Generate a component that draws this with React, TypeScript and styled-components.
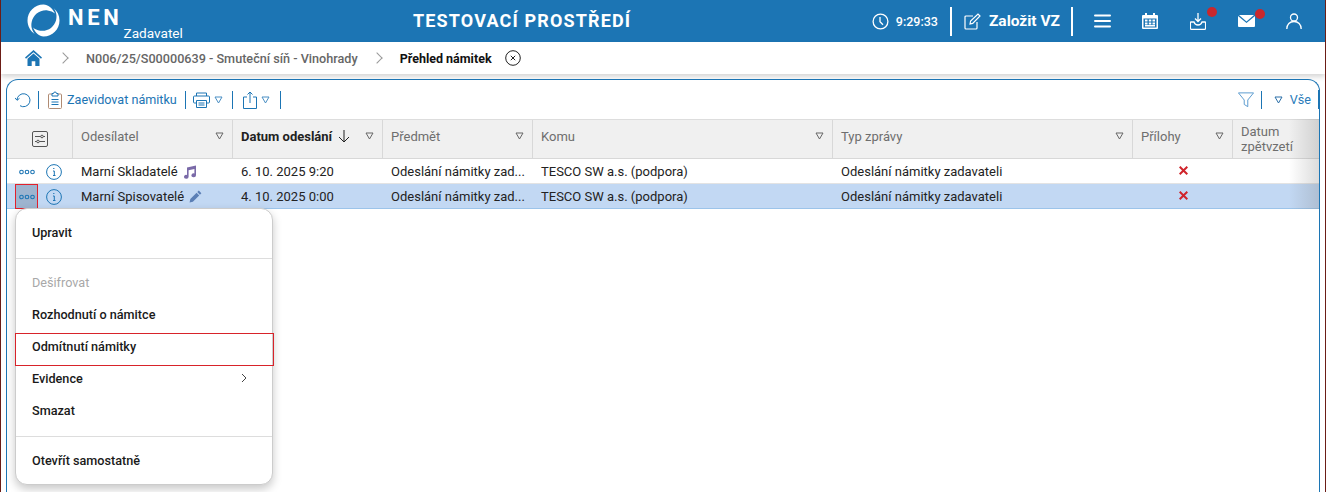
import styled, { createGlobalStyle } from 'styled-components';

const GlobalStyle = createGlobalStyle`
  html, body {
    margin: 0;
    padding: 0;
    background: #fff;
  }
  body {
    font-family: Roboto, "Liberation Sans", sans-serif;
    font-size: 13px;
    color: #222;
  }
  * {
    box-sizing: border-box;
  }
`;

type Row = {
  sender: string;
  date: string;
  kind: 'audio' | 'pen';
  selected?: boolean;
};

const rows: Row[] = [
  { sender: 'Marní Skladatelé', date: '6. 10. 2025 9:20', kind: 'audio' },
  { sender: 'Marní Spisovatelé', date: '4. 10. 2025 0:00', kind: 'pen', selected: true },
];

const BLUE = '#1c75b4';

const Triangle = () => (
  <svg width="9" height="8" viewBox="0 0 9 8" fill="none" stroke="currentColor" strokeWidth="1">
    <path d="M1 1h7L4.5 7z" />
  </svg>
);

const Logo = () => (
  <svg width="33" height="33" viewBox="0 0 33 33" fill="#fff">
    <path d="M16.5 0.5C7.6 0.5 0.5 7.7 0.5 16.5c0 5.6 2.9 10.6 7.3 13.4C5 27 3.6 22.2 4.8 17.6 6.4 11 12.4 5.6 20.6 6.4c2.9.3 5.5 1.5 7.4 3.2C25.3 4 21.2.5 16.5.5z" />
    <path d="M16.5 32.5c8.9 0 16-7.2 16-16 0-5-2.2-9.3-5.8-12.2 2.500 3.100 3.600 7.600 2.300 12.100-1.900 6.400-8 11.300-15.900 10.300-2.800-.4-5.200-1.500-7-3.200C8.400 28.900 12.200 32.500 16.500 32.500z" />
  </svg>
);

const App = () => {
  return (
    <Page>
      <GlobalStyle />
      <Header>
        <Brand>
          <Logo />
          <BrandName>NEN</BrandName>
          <BrandRole>Zadavatel</BrandRole>
        </Brand>
        <EnvTitle>TESTOVACÍ PROSTŘEDÍ</EnvTitle>
        <HeaderTools>
          <svg width="17" height="17" viewBox="0 0 17 17" fill="none" stroke="#fff" strokeWidth="1.3">
            <circle cx="8.500" cy="8.500" r="7.400" />
            <path d="M8 4v4.800l3 3" />
          </svg>
          <Clock>9:29:33</Clock>
          <HeaderSeparator />
          <svg width="17" height="17" viewBox="0 0 17 17" fill="none" stroke="#fff" strokeWidth="1.2">
            <path d="M9 3H2a1 1 0 0 0-1 1v11a1 1 0 0 0 1 1h10a1 1 0 0 0 1-1V9" />
            <path d="M6 11l.6-3L14 1l2 2-7.300 7.400z" />
          </svg>
          <CreateLabel>Založit VZ</CreateLabel>
          <HeaderSeparator />
          <IconSlot>
            <svg width="17" height="14" viewBox="0 0 17 14" fill="#fff">
              <rect y="0.500" width="17" height="2" rx="1" />
              <rect y="6" width="17" height="2" rx="1" />
              <rect y="11.500" width="17" height="2" rx="1" />
            </svg>
          </IconSlot>
          <IconSlot>
            <svg width="16" height="16" viewBox="0 0 16 16" fill="#fff">
              <path d="M3 0h2v2h6V0h2v2h2a1 1 0 0 1 1 1v12a1 1 0 0 1-1 1H1a1 1 0 0 1-1-1V3a1 1 0 0 1 1-1h2z" />
              <g fill="#1c75b4">
                <rect x="1.500" y="5.500" width="13" height="9" />
              </g>
              <g fill="#fff">
                <rect x="3" y="6.500" width="2.500" height="2" />
                <rect x="6.800" y="6.500" width="2.500" height="2" />
                <rect x="10.500" y="6.500" width="2.500" height="2" />
                <rect x="3" y="9.500" width="2.500" height="2" />
                <rect x="6.800" y="9.500" width="2.500" height="2" />
                <rect x="10.500" y="9.500" width="2.500" height="2" />
                <rect x="3" y="12" width="10" height="1.500" />
              </g>
            </svg>
          </IconSlot>
          <IconSlot>
            <svg width="16" height="17" viewBox="0 0 16 17" fill="none" stroke="#fff" strokeWidth="1.300">
              <path d="M8 0v8M5 5.500L8 8.500l3-3" />
              <path d="M4 9H1a.7.7 0 0 0-.6.7v5.600a1 1 0 0 0 1 1h13.200a1 1 0 0 0 1-1V9.700A.7.700 0 0 0 15 9h-3c-.6 2-2 3-4 3s-3.400-1-4-3z" />
            </svg>
            <Badge />
          </IconSlot>
          <IconSlot>
            <svg width="17" height="12" viewBox="0 0 17 12" fill="#fff">
              <path d="M1 0h15L8.500 6.500z" />
              <path d="M0 1l8.500 7L17 1v10a1 1 0 0 1-1 1H1a1 1 0 0 1-1-1z" />
            </svg>
            <Badge />
          </IconSlot>
          <IconSlot>
            <svg width="16" height="16" viewBox="0 0 16 16" fill="none" stroke="#fff" strokeWidth="1.300">
              <circle cx="8" cy="4.500" r="3.500" />
              <path d="M.8 16c0-4.500 3-7.500 7.200-7.500s7.200 3 7.200 7.500" />
            </svg>
          </IconSlot>
        </HeaderTools>
      </Header>

      <Breadcrumb>
        <HomeLink>
          <svg width="17" height="16" viewBox="0 0 17 16" fill={BLUE}>
            <path d="M8.500 0L0 7.500l1 1.200L8.500 2.200 16 8.700l1-1.200z" />
            <path d="M8.500 3.500L2.500 8.800V16h4.200v-4.800h3.600V16h4.200V8.800z" />
          </svg>
        </HomeLink>
        <CrumbArrow $left={17} />
        <CrumbLink>N006/25/S00000639 - Smuteční síň - Vinohrady</CrumbLink>
        <CrumbArrow $left={15} />
        <CrumbCurrent>Přehled námitek</CrumbCurrent>
        <svg width="16" height="16" viewBox="0 0 16 16" fill="none" stroke="#222" strokeWidth="1">
          <circle cx="8" cy="8" r="7.300" />
          <path d="M5.800 5.800l4.400 4.400M10.200 5.800l-4.400 4.400" />
        </svg>
      </Breadcrumb>

      <Panel>
        <Toolbar>
          <svg width="16" height="16" viewBox="0 0 16 16" fill="none" stroke={BLUE} strokeWidth="1">
            <path d="M2 8A6.500 6.500 0 1 1 5 13.700" />
            <path d="M0 5.800L2 8.300 4.500 6.300" />
          </svg>
          <ToolDivider $left={7} $right={9} />
          <svg width="14" height="18" viewBox="0 0 14 18" fill="none" stroke="#b08b73" strokeWidth="1">
            <path d="M4 3H1.500a1 1 0 0 0-1 1v12.500a1 1 0 0 0 1 1h11a1 1 0 0 0 1-1V4a1 1 0 0 0-1-1H10" />
            <path d="M4 2.500h1.500a1.500 1.500 0 0 1 3 0H10v2.500H4z" stroke={BLUE} />
            <path d="M3.500 8.500h7M3.500 11h7M3.500 13.500h7" stroke={BLUE} />
          </svg>
          <ToolLabel>Zaevidovat námitku</ToolLabel>
          <ToolDivider $left={8} $right={7} />
          <ToolMenu>
            <svg width="17" height="16" viewBox="0 0 17 16" fill="none" stroke={BLUE} strokeWidth="1">
              <path d="M3.500 4V1h10v3M3.500 11h-2a1 1 0 0 1-1-1V5a1 1 0 0 1 1-1h14a1 1 0 0 1 1 1v5a1 1 0 0 1-1 1h-2" />
              <path d="M3.500 8.500h10v7h-10zM5.500 11h6M5.500 13h6" />
            </svg>
            <Triangle />
          </ToolMenu>
          <ToolDivider $left={9} $right={10} />
          <ToolMenu>
            <svg width="14" height="18" viewBox="0 0 14 18" fill="none" stroke={BLUE} strokeWidth="1">
              <path d="M4 6H.5v11.500h13V6H10" />
              <path d="M7 12V1M4.500 3.500L7 1l2.500 2.500" />
            </svg>
            <Triangle />
          </ToolMenu>
          <ToolDivider $left={10} $right={0} />
          <ToolbarEnd>
            <svg width="16" height="16" viewBox="0 0 18 17" fill="none" stroke="#5a9bcf" strokeWidth="1.100">
              <path d="M.5.500h17L11 8.500V16l-4-2.500V8.500z" />
            </svg>
            <ToolDivider $left={7} $right={12} />
            <Triangle />
            <EndLabel>Vše</EndLabel>
          </ToolbarEnd>
        </Toolbar>

        <Table>
          <HeadRow>
            <HeadCell $center>
              <svg width="16" height="16" viewBox="0 0 16 16" fill="none" stroke="#555" strokeWidth="1">
                <rect x="0.500" y="0.500" width="15" height="15" rx="1.500" />
                <path d="M3 5.500h10M3 10.500h10" />
                <circle cx="10" cy="5.500" r="1.300" fill="#f0f0f0" />
                <circle cx="6" cy="10.500" r="1.300" fill="#f0f0f0" />
              </svg>
            </HeadCell>
            <HeadCell>
              <HeadLabel>Odesílatel</HeadLabel>
              <Triangle />
            </HeadCell>
            <HeadCell>
              <SortedLabel>
                Datum odeslání
                <svg width="12" height="13" viewBox="0 0 12 13" fill="none" stroke="#222" strokeWidth="1">
                  <path d="M6 0v12M1 7l5 5 5-5" />
                </svg>
              </SortedLabel>
              <Triangle />
            </HeadCell>
            <HeadCell>
              <HeadLabel>Předmět</HeadLabel>
              <Triangle />
            </HeadCell>
            <HeadCell>
              <HeadLabel>Komu</HeadLabel>
              <Triangle />
            </HeadCell>
            <HeadCell>
              <HeadLabel>Typ zprávy</HeadLabel>
              <Triangle />
            </HeadCell>
            <HeadCell>
              <HeadLabel>Přílohy</HeadLabel>
              <Triangle />
            </HeadCell>
            <WrappedHeadCell>
              <HeadLabel>Datum zpětvzetí</HeadLabel>
            </WrappedHeadCell>
          </HeadRow>

          {rows.map((row) => (
            <BodyRow key={row.sender} $selected={row.selected}>
              <ActionCell>
                <DotsButton $active={row.selected}>
                  <svg width="16" height="6" viewBox="0 0 16 6" fill="none" stroke={BLUE} strokeWidth="1.100">
                    <circle cx="2.500" cy="3" r="1.800" />
                    <circle cx="8" cy="3" r="1.800" />
                    <circle cx="13.500" cy="3" r="1.800" />
                  </svg>
                </DotsButton>
                <svg width="16" height="16" viewBox="0 0 16 16" fill="none" stroke={BLUE} strokeWidth="1">
                  <circle cx="8" cy="8" r="7.400" />
                  <path d="M7.200 4.500h1.200M7 7h1.300v4.500H7M7 11.500h2.500" />
                </svg>
              </ActionCell>
              <BodyCell>
                {row.sender}
                {row.kind === 'audio' ? (
                  <svg width="14" height="14" viewBox="0 0 14 14" fill="#7a6aa8">
                    <path d="M4 2.500L13 .5v9.800a2.300 2 0 1 1-1.600-1.900V4L5.600 5.200v6.600a2.300 2 0 1 1-1.600-1.900z" />
                  </svg>
                ) : (
                  <svg width="13" height="13" viewBox="0 0 13 13" fill="#5b7fb5">
                    <path d="M9.800.6l2.600 2.600-1.500 1.500-2.600-2.600zM7.600 2.800l2.600 2.600-6.300 6.300L.6 12.400l.7-3.300z" />
                  </svg>
                )}
              </BodyCell>
              <BodyCell>{row.date}</BodyCell>
              <BodyCell>Odeslání námitky zad...</BodyCell>
              <BodyCell>TESCO SW a.s. (podpora)</BodyCell>
              <BodyCell>Odeslání námitky zadavateli</BodyCell>
              <MarkCell>
                <svg width="9" height="9" viewBox="0 0 9 9" stroke="#d0242b" strokeWidth="2">
                  <path d="M.7.700l7.600 7.600M8.300.700L.7 8.300" />
                </svg>
              </MarkCell>
              <BodyCell />
            </BodyRow>
          ))}
          <ScrollFade />
        </Table>

        <ContextMenu>
          <MenuItem>Upravit</MenuItem>
          <MenuRule />
          <MenuItem $disabled>Dešifrovat</MenuItem>
          <MenuItem>Rozhodnutí o námitce</MenuItem>
          <MenuItem $focused>Odmítnutí námitky</MenuItem>
          <MenuItem>
            Evidence
            <svg width="6" height="10" viewBox="0 0 6 10" fill="none" stroke="#444" strokeWidth="1">
              <path d="M1 1l4 4-4 4" />
            </svg>
          </MenuItem>
          <MenuItem>Smazat</MenuItem>
          <MenuRule />
          <MenuItem>Otevřít samostatně</MenuItem>
        </ContextMenu>
      </Panel>
    </Page>
  );
};

export default App;

const Page = styled.div`
  position: relative;
  width: 1326px;
  height: 492px;
  overflow: hidden;
  background: #fff;
  border-left: 1px solid #6b1d16;
  border-right: 1px solid #6b1d16;
`;

const Header = styled.header`
  display: flex;
  align-items: center;
  height: 42px;
  background: ${BLUE};
  color: #fff;
`;

const Brand = styled.div`
  display: flex;
  align-items: flex-start;
  width: 412px;
  height: 42px;
  padding: 4px 0 0 26px;
`;

const BrandName = styled.span`
  margin: 4px 0 0 8px;
  font-size: 22px;
  line-height: 20px;
  font-weight: 700;
  letter-spacing: 3.700px;
`;

const BrandRole = styled.span`
  margin: 22px 0 0 1px;
  font-size: 13.600px;
  line-height: 15px;
`;

const EnvTitle = styled.h1`
  margin: 0;
  font-size: 18px;
  line-height: 42px;
  font-weight: 700;
  letter-spacing: 1.150px;
  white-space: nowrap;
`;

const HeaderTools = styled.div`
  display: flex;
  align-items: center;
  margin-left: auto;
`;

const Clock = styled.span`
  margin: 0 12px 0 7px;
  font-size: 12.500px;
  font-weight: 500;
`;

const HeaderSeparator = styled.span`
  width: 2px;
  height: 29px;
  margin-right: 12px;
  background: #fff;
`;

const CreateLabel = styled.span`
  margin: 0 11px 0 8px;
  font-size: 15.500px;
  font-weight: 700;
`;

const IconSlot = styled.span`
  position: relative;
  display: flex;
  justify-content: center;
  width: 48px;
  margin-left: -7px;
  margin-right: 7px;
`;

const Badge = styled.span`
  position: absolute;
  top: -6px;
  right: 5px;
  width: 10px;
  height: 10px;
  border-radius: 50%;
  background: #c9282d;
`;

const Breadcrumb = styled.nav`
  position: relative;
  display: flex;
  align-items: center;
  height: 32px;
  padding-left: 24px;
  background: #fff;
  box-shadow: 0 3px 5px rgba(0, 0, 0, 0.16);
  font-weight: 500;
`;

const HomeLink = styled.span`
  display: flex;
`;

const CrumbArrow = styled.span<{ $left: number }>`
  width: 8px;
  height: 8px;
  margin: 0 19px 0 ${(p) => p.$left}px;
  border-top: 1px solid #999;
  border-right: 1px solid #999;
  transform: rotate(45deg);
`;

const CrumbLink = styled.span`
  color: #666;
  font-size: 12.650px;
`;

const CrumbCurrent = styled.span`
  margin-right: 13px;
  color: #111;
  font-size: 12.500px;
  font-weight: 700;
`;

const Panel = styled.main`
  position: relative;
  margin: 5px 5px 0 5px;
  height: 420px;
  border: 1px solid ${BLUE};
  border-bottom: 0;
  border-radius: 12px 12px 0 0;
  background: #fff;
`;

const Toolbar = styled.div`
  position: relative;
  display: flex;
  align-items: center;
  height: 39px;
  padding: 0 8px 0 8px;
  color: ${BLUE};
  &::after {
    content: '';
    position: absolute;
    top: 10px;
    right: -1px;
    width: 2px;
    height: 19px;
    background: ${BLUE};
  }
`;

const ToolDivider = styled.span<{ $left: number; $right: number }>`
  width: 1px;
  height: 18px;
  margin: 0 ${(p) => p.$right}px 0 ${(p) => p.$left}px;
  background: ${BLUE};
`;

const ToolLabel = styled.span`
  margin-left: 5px;
  font-size: 12.600px;
`;

const EndLabel = styled(ToolLabel)`
  margin-left: 7px;
  color: #2a7cba;
`;

const ToolMenu = styled.span`
  display: flex;
  align-items: center;
  gap: 4px;
  color: #4a8fc4;
`;

const ToolbarEnd = styled.div`
  display: flex;
  align-items: center;
  margin-left: auto;
  color: #2a6fa8;
`;

const Table = styled.div`
  position: relative;
`;

const columns = '66px 160px 150px 150px 300px 300px 100px 86px';

const HeadRow = styled.div`
  display: grid;
  grid-template-columns: ${columns};
  height: 40px;
  background: #f0f0f0;
  border-top: 1px solid #ddd;
  border-bottom: 1px solid #d8d8d8;
`;

const HeadCell = styled.div<{ $center?: boolean }>`
  display: flex;
  align-items: center;
  justify-content: ${(p) => (p.$center ? 'center' : 'space-between')};
  padding: ${(p) => (p.$center ? '0' : '0 8px 6px 8px')};
  border-right: 1px solid #d8d8d8;
  color: #666;
`;

const WrappedHeadCell = styled(HeadCell)`
  padding: 0 8px;
  border-right: 0;
`;

const HeadLabel = styled.span`
  color: #6e6e6e;
  font-size: 13px;
  line-height: 15px;
`;

const SortedLabel = styled.span`
  display: flex;
  align-items: center;
  gap: 6px;
  color: #222;
  font-weight: 700;
`;

const BodyRow = styled.div<{ $selected?: boolean }>`
  display: grid;
  grid-template-columns: ${columns};
  height: 25px;
  background: ${(p) => (p.$selected ? '#c2d8f3' : '#fff')};
  border-bottom: 1px solid ${(p) => (p.$selected ? '#9cc4ea' : '#e3e3e3')};
`;

const BodyCell = styled.div`
  display: flex;
  align-items: center;
  gap: 5px;
  padding: 0 8px;
  overflow: hidden;
  white-space: nowrap;
  font-size: 13px;
  color: #222;
`;

const MarkCell = styled(BodyCell)`
  justify-content: center;
  padding-bottom: 2px;
`;

const ActionCell = styled.div`
  display: flex;
  align-items: center;
  gap: 8px;
  padding-left: 8px;
`;

const DotsButton = styled.span<{ $active?: boolean }>`
  display: flex;
  align-items: center;
  justify-content: center;
  width: 23px;
  height: 25px;
  background: ${(p) => (p.$active ? '#9db4cf' : 'transparent')};
  outline: ${(p) => (p.$active ? '1px solid #e2202c' : 'none')};
  outline-offset: -1px;
`;

const ScrollFade = styled.div`
  position: absolute;
  top: 0;
  right: 0;
  bottom: 0;
  width: 30px;
  pointer-events: none;
  background: linear-gradient(to right, rgba(120, 120, 120, 0), rgba(120, 120, 120, 0.26));
`;

const ContextMenu = styled.div`
  position: absolute;
  top: 128px;
  left: 8px;
  width: 258px;
  height: 277px;
  padding-top: 7px;
  background: #fff;
  border: 1px solid #ccc;
  border-radius: 12px;
  box-shadow: 0 4px 10px rgba(0, 0, 0, 0.22);
`;

const MenuItem = styled.div<{ $disabled?: boolean; $focused?: boolean }>`
  position: relative;
  display: flex;
  align-items: center;
  justify-content: space-between;
  height: 32px;
  padding: 0 25px 0 16px;
  color: ${(p) => (p.$disabled ? '#a8a8a8' : '#1a1a1a')};
  font-size: 12.650px;
  font-weight: ${(p) => (p.$disabled ? 400 : 500)};
  ${(p) =>
    p.$focused
      ? `&::after {
          content: '';
          position: absolute;
          box-sizing: border-box;
          top: 3px;
          left: -1px;
          right: -2px;
          height: 33px;
          border: 1px solid #d8232a;
        }`
      : ''}
`;

const MenuRule = styled.div`
  height: 1px;
  margin: 10px 0 7px;
  background: #ddd;
`;
